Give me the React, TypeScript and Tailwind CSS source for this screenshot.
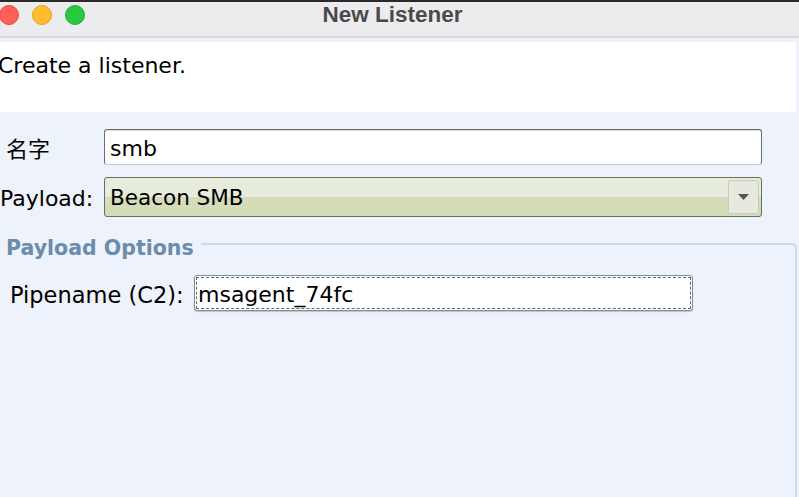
import React from "react";

export default function App() {
  const font = { fontFamily: '"DejaVu Sans", "Noto Sans CJK SC", sans-serif' };
  return (
    <div className="w-[799px] h-[497px] overflow-hidden bg-[#eef2fa] relative" style={font}>
      <div className="h-[2px] bg-[#2a2a2a]" />
      <div className="h-[36px] bg-[#ececee] border-b-2 border-[#d8d8dc] relative">
        <div className="absolute left-[-1px] top-[3px] w-[20px] h-[20px] rounded-full bg-[#fe5f57] border border-[#e24b41]" />
        <div className="absolute left-[32px] top-[3px] w-[20px] h-[20px] rounded-full bg-[#febc2e] border border-[#e0a224]" />
        <div className="absolute left-[65px] top-[3px] w-[20px] h-[20px] rounded-full bg-[#28c840] border border-[#1fad32]" />
        <div
          className="w-full text-center text-[22.5px] leading-[26px] font-bold text-[#4a4a4a]"
          style={{ fontFamily: '"Liberation Sans", Arial, sans-serif' }}
        >
          <span className="relative left-[-7px]">New Listener</span>
        </div>
      </div>
      <div className="pt-[4px] pr-[3px]">
        <div className="bg-white h-[70px]">
          <div className="text-[22px] text-black -ml-[2px] pt-[11px] leading-[26px]">Create a listener.</div>
        </div>
      </div>
      <div className="mt-[17px] flex items-center">
        <div className="w-[104px] pl-[6px] pt-[5px] text-[22px] leading-[26px] text-black">名字</div>
        <div className="w-[658px] h-[36px] bg-white border border-[#6e6e6e] border-b-[#c8c8c8] rounded-[3px] shadow-[inset_0_1px_1px_rgba(0,0,0,0.15)] flex items-center pl-[5px] pt-[2px] text-[22px] text-black">
          smb
        </div>
      </div>
      <div className="mt-[12px] flex items-center">
        <div className="w-[104px] pt-[3px] text-[22px] leading-[26px] text-black">Payload:</div>
        <div className="w-[658px] h-[40px] border border-[#6a6e5e] rounded-[3px] overflow-hidden flex relative bg-[linear-gradient(#e8ecdc_0,#e8ecdc_50%,#d4dcb8_50%,#d4dcb8_100%)]">
          <div className="flex-1 flex items-center pl-[5px] pt-[3px] text-[21.5px] text-black">Beacon SMB</div>
          <div className="w-[31px] my-[2px] mr-[2px] border border-[#c8ccbc] rounded-[2px] bg-[#e6e9dc] flex items-center justify-center">
            <svg width="11" height="6" viewBox="0 0 11 6"><path d="M0 0 H11 L5.5 6 Z" fill="#555" /></svg>
          </div>
        </div>
      </div>
      <div className="relative mt-[18px]">
        <div className="absolute left-[-6px] top-[8px] w-[803px] h-[300px] border-2 border-[#cddaea] rounded-[5px]" />
        <div className="relative flex">
          <div className="pl-[6px] pr-[7px] pt-[2px] bg-[#eef2fa] text-[20.5px] font-bold text-[#6a8cad] leading-[22px]">Payload Options</div>
        </div>
        <div className="relative mt-[16px] flex items-center">
          <div className="pl-[10px] w-[194px] pt-[3px] text-[22.5px] leading-[26px] text-black">Pipename (C2):</div>
          <div className="w-[499px] h-[36px] bg-white border border-[#8a8a8a] rounded-[3px] shadow-[0_1px_1px_rgba(0,0,0,0.2)] p-[1px]">
            <div className="w-full h-full border border-dashed border-[#4d6c8c] flex items-center pl-[1px] pt-[2px] text-[22px] text-black">
              msagent_74fc
            </div>
          </div>
        </div>
      </div>
    </div>
  );
}
